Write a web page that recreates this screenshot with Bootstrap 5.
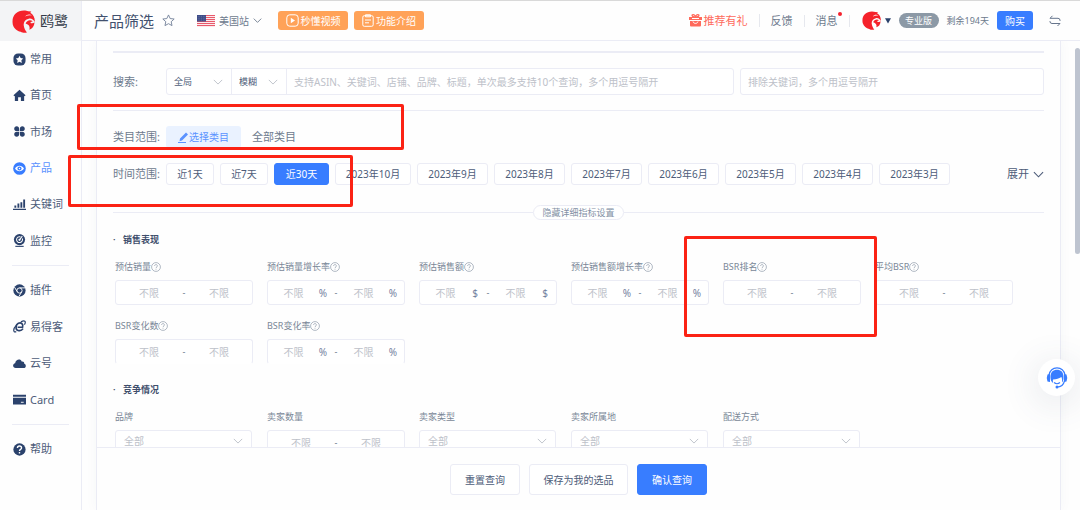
<!DOCTYPE html>
<html lang="zh-CN">
<head>
<meta charset="utf-8">
<meta name="viewport" content="width=device-width, initial-scale=1">
<title>产品筛选 - 鸥鹭</title>
<link rel="stylesheet" href="https://cdn.jsdelivr.net/npm/bootstrap@5.3.0/dist/css/bootstrap.min.css">
<style>
:root{--ink:#4d5c79;--navy:#2b426c;--mute:#6d7a8d;--line:#ebecf5;--hint:#bdc1c9;--blue:#387dff}
body{font-family:"Noto Sans","Noto Sans CJK SC",sans-serif;font-size:11px;line-height:16px;color:var(--ink);background:#fefefe;border-top:1px solid #d9d9d9}
a{color:inherit;text-decoration:none}
svg{flex:none}
.side{width:82px;border-right:1px solid var(--line)}
.brand{height:40px;background:#f3f4f6;font-size:14px;color:#333b49;padding-left:12px;gap:5px}
.side-group{padding-left:13px}
.side-group a{gap:4px;color:var(--ink)}
.side-group a.active{color:#5b92ff}
.side-group svg{color:var(--navy);width:13px;height:13px}
.side-group a.active svg{color:var(--blue)}
.g6{height:218px}.g4{height:146px}.g1{height:36px}
.side-line{height:1px;background:var(--line);margin:6px 12px}
.top{height:40px;border-bottom:1px solid var(--line);padding:0 19px 0 12px}
.top h1{font-size:15px;line-height:20px;color:#42516e;font-weight:400}
.site{font-size:10px;color:var(--mute);margin-left:22px}
.btn{--bs-btn-font-size:10px;--bs-btn-line-height:14px;--bs-btn-padding-x:0;--bs-btn-padding-y:0;--bs-btn-border-radius:3px}
.tips{gap:6px}
.btn-tip{--bs-btn-bg:#ffa258;--bs-btn-color:#fff;--bs-btn-hover-bg:#f5933f;--bs-btn-hover-color:#fff;width:70px;height:19px;border:0;gap:2px}
.btn-main{--bs-btn-bg:#387dff;--bs-btn-color:#fff;--bs-btn-border-color:#387dff;--bs-btn-hover-bg:#2468ea;--bs-btn-hover-color:#fff}
.btn-line{--bs-btn-bg:#fff;--bs-btn-color:#4d5c79;--bs-btn-border-color:#ebecf5;--bs-btn-hover-border-color:#387dff;--bs-btn-hover-color:#387dff}
.btn-buy{width:36px;height:19px;border:0}
.links a{padding:0 11px;border-right:1px solid #e6e8ee;line-height:12px;color:var(--mute);gap:2px}
.links a.gift{color:#ff6a5c}
.dot{width:4px;height:4px;background:#f5222d;right:7px;top:-3px}
.plan{background:#8c99a6;font-size:9px;line-height:15px;width:40px}
.remain{font-size:9px;color:var(--mute)}
.stage{padding:0 19px 0 14px}
.panel{border:solid var(--line);border-width:0 1px;box-shadow:0 0 12px rgba(60,70,110,.04)}
.scroller{padding:10px 16px 0}
.rule{height:1px;background:var(--line)}
.rule.strong{height:2px}
.line-gap{margin-top:15px}
.fold-gap{margin-top:20px}
.lab{width:53px;color:var(--mute)}
.form-control,.form-select{font-size:10px;line-height:14px;color:var(--ink);border-color:var(--line);background-color:#fff;border-radius:3px;min-height:0}
.form-control::placeholder{color:var(--hint);opacity:1}
.form-select{background-image:url("data:image/svg+xml,%3Csvg xmlns='http://www.w3.org/2000/svg' viewBox='0 0 12 12' fill='none' stroke='%23b4b9c3'%3E%3Cpath d='M1 3.5l5 5 5-5'/%3E%3C/svg%3E");background-size:10px;background-position:right 8px center}
.find{height:27px;padding:0 7px}
.find-wrap{flex:568 1 0;width:auto}.skip{flex:288 1 0;width:auto;min-width:0;margin-left:6px}
.input-group>.mode{flex:none;width:66px;font-size:9px}
.input-group>.mode.short{width:56px}
.pick{--bs-btn-font-size:10px;width:75px;height:22px;background:#eaf2ff;color:#5b92ff;border:0}
.every{margin-left:11px;color:var(--mute)}
.days{gap:6px}
.days .btn{height:22px;min-width:48px}
.days .btn-main{min-width:55px}
.days .month{min-width:71px}
.days .month.wide{min-width:76px}
.fold{color:var(--hint)}
.fold .btn{font-size:9px;width:91px;height:15px;border-radius:8px;color:#8290a5}
.block-title{font-size:9px;line-height:14px;font-weight:600;color:#3f4e6c;margin:13px 0}
.block-title.next{margin-top:19px}
.block-title::before{content:"·";display:inline-block;width:10px}
.fields{display:grid;grid-template-columns:repeat(auto-fill,138px);gap:14px;padding-left:2px}
.cap{font-size:9px;line-height:14px;color:#7a8797;margin-bottom:6px;white-space:nowrap}
.cap svg{vertical-align:-2px;color:#98a3b0}
.range{height:25px;border:1px solid var(--line);border-radius:3px;background:#fff}
.cut .range{border-bottom-color:transparent}
.range .half{flex:1 1 0;min-width:0;padding:0 1px}
.range .half.unit{padding-right:6px}
.range input{flex:1 1 0;min-width:0;width:0;padding:0;border:0;text-align:center;background:none}
.range span.u{width:10px;text-align:center;font-size:10px;color:#7482a0}
.dash{width:4px;text-align:center;color:var(--mute);font-size:9px}
.pick-one{width:137px;height:22px;padding:0 8px;color:var(--hint)}
.actions{border-top:1px solid var(--line);padding:16px 0 15px;gap:9px;background:#fefefe}
.actions .btn{height:31px;width:70px}
.actions .btn.save{width:99px}
.thumb{right:0;top:47px;width:5px;height:206px;background:#bec4d0;border-radius:3px}
.helper{right:5px;top:358px;width:37px;height:37px;border:0;background:#fff;box-shadow:0 6px 36px 2px rgba(70,85,115,.14);padding:0}
.mark-box{border:3px solid #fb2214;border-radius:2px;pointer-events:none}
.mb-a{left:77px;top:103px;width:327px;height:46px}
.mb-b{left:68px;top:154px;width:285px;height:52px}
.mb-c{left:684px;top:235px;width:193px;height:101px}
</style>
</head>
<body class="d-flex vh-100 overflow-hidden position-relative">

<svg class="d-none">
  <symbol id="bird" viewBox="0 0 22 22"><path fill="#f5222b" d="M.8 14C-.8 6 4 .5 11.500.5c1.500 0 3 .3 4 .8l3 .2-1 1.200C20.500 4.500 22 7.500 21.800 11.500 20.500 9 18.500 7.800 16 8.300c-3.500.8-5.300 3.500-4.700 6.700.4 2.500 1.500 4.700 3 6.500-2 .6-4.500.3-6-.7C5 20 2 18 .8 14z"/><path fill="#fff" d="M12.500 6.300C14 4.300 17 3.600 19 5.300c-2.500-.5-4.500 0-6.500 1z"/><path fill="#f5222b" d="M13 13c1-3 4.500-4.300 7-2-1.400 0-2.300.5-2.400 1.400 1.500.5 3 .3 4-.6-.3 4-2.400 6.400-5 7 1-2.500-.6-5-3.600-5.800z"/></symbol>
  <symbol id="down" viewBox="0 0 12 12"><path fill="none" stroke="currentColor" stroke-width="1.200" d="M1 3.500l5 5 5-5"/></symbol>
  <symbol id="ask" viewBox="0 0 12 12"><circle cx="6" cy="6" r="5.300" fill="none" stroke="currentColor" stroke-width=".9"/><path d="M4.300 4.800C4.300 2.500 7.700 2.500 7.700 4.700 7.700 6 6 6 6 7.300M6 8.200v1" fill="none" stroke="currentColor" stroke-width=".9"/></symbol>
</svg>

<aside class="side flex-shrink-0">
  <a href="#" class="brand d-flex align-items-center"><svg width="23" height="23"><use href="#bird"/></svg>鸥鹭</a>
  <nav aria-label="主菜单">
    <div class="side-group g6 d-flex flex-column">
      <a href="#" class="d-flex flex-fill align-items-center"><svg viewBox="0 0 14 14"><rect x=".5" y=".5" width="13" height="13" rx="5" fill="currentColor"/><path fill="#fff" d="M7 3l1.200 2.500 2.800.4-2 2 .5 2.800L7 9.400l-2.500 1.300.5-2.800-2-2 2.800-.4z"/></svg>常用</a>
      <a href="#" class="d-flex flex-fill align-items-center"><svg viewBox="0 0 14 14"><path fill="currentColor" d="M7 .8l6.500 6-.9.900-.6-.4v5.700H8.500V9h-3v4H2V7.300l-.6.4-.9-.9z"/></svg>首页</a>
      <a href="#" class="d-flex flex-fill align-items-center"><svg viewBox="0 0 14 14"><g fill="currentColor"><path d="M4 1.300c1.700 0 2.600 1 2.600 2.700v2.500H4C2.400 6.500 1.300 5.500 1.300 4S2.400 1.300 4 1.300zM10 1.300c1.600 0 2.700 1.100 2.700 2.700S11.600 6.500 10 6.500H7.400V4c0-1.700 1-2.700 2.600-2.700zM4 7.400h2.600V10c0 1.700-.9 2.700-2.600 2.700S1.300 11.600 1.300 10 2.400 7.400 4 7.400zM7.400 7.400H10c1.600 0 2.700 1 2.700 2.600s-1.100 2.700-2.700 2.700S7.400 11.700 7.400 10z"/></g></svg>市场</a>
      <a href="#" class="active d-flex flex-fill align-items-center"><svg viewBox="0 0 14 14"><circle cx="7" cy="7" r="6.800" fill="currentColor"/><path fill="#fff" d="M2.200 7c2.200-4 7.400-4 9.600 0-2.200 4-7.400 4-9.600 0z"/><circle cx="7" cy="7" r="2.200" fill="currentColor"/><circle cx="7" cy="7" r=".8" fill="#fff"/></svg>产品</a>
      <a href="#" class="d-flex flex-fill align-items-center"><svg viewBox="0 0 14 14"><path fill="currentColor" d="M0 11.500h14V13H0zM1.500 8h2v2.500h-2zM4.800 6h2v4.500h-2zM8 4.500h2v6H8zM11 1.500h2v9h-2z"/></svg>关键词</a>
      <a href="#" class="d-flex flex-fill align-items-center"><svg viewBox="0 0 14 14"><circle cx="7" cy="6" r="6" fill="currentColor"/><path fill="none" stroke="#fff" stroke-width="1.100" d="M10 4.800A3.200 3.200 0 1 1 8 3M7 6.300l3-4"/><circle cx="7" cy="6.300" r="1.200" fill="#fff"/><path stroke="currentColor" stroke-width="1.200" d="M2.500 13.300h9"/></svg>监控</a>
    </div>
    <div class="side-line"></div>
    <div class="side-group g4 d-flex flex-column">
      <a href="#" class="d-flex flex-fill align-items-center"><svg viewBox="0 0 14 14"><circle cx="7" cy="7" r="6.600" fill="currentColor"/><circle cx="7" cy="7" r="2.800" fill="none" stroke="#fff"/><path fill="none" stroke="#fff" d="M7 4.200h6M4.600 8.400l-3-5M9.400 8.400l-3 5"/></svg>插件</a>
      <a href="#" class="d-flex flex-fill align-items-center"><svg viewBox="0 0 14 14"><path fill="none" stroke="currentColor" stroke-width="1.800" d="M5 7.800h5.300C11.500 4 8.500 2.300 5.800 3.600 2.500 5.300 2.500 10.300 5.500 11.300c2.200.6 4.200-.3 5.300-2"/><path fill="none" stroke="currentColor" stroke-width="1.300" d="M3.500 12.500C-.5 14 .3 9 3.500 5.800M8.500 2C12.500 0 14.500 1 12.300 5"/></svg>易得客</a>
      <a href="#" class="d-flex flex-fill align-items-center"><svg viewBox="0 0 14 14"><path fill="currentColor" d="M3 11.800C-.6 11.800-.8 7.300 2.300 6.700 3 2.500 8 1.300 9.600 5c2-.2 2.600 1 2.500 2.300 2.500.8 2.200 4.500-.6 4.500z"/></svg>云号</a>
      <a href="#" class="d-flex flex-fill align-items-center"><svg viewBox="0 0 14 14"><path fill="currentColor" d="M0 2h14v2H0zM0 5h14v7.500H0z"/><path stroke="#fff" d="M8.500 10h3"/></svg>Card</a>
    </div>
    <div class="side-line"></div>
    <div class="side-group g1 d-flex flex-column">
      <a href="#" class="d-flex flex-fill align-items-center"><svg viewBox="0 0 14 14"><circle cx="7" cy="7" r="6.600" fill="currentColor"/><path fill="none" stroke="#fff" stroke-width="1.500" d="M4.800 5.500c0-3 4.400-2.800 4.400-.2C9.200 7 7 6.800 7 8.500M7 9.600v1.600"/></svg>帮助</a>
    </div>
  </nav>
</aside>

<div class="d-flex flex-column flex-grow-1 overflow-hidden">
  <header class="top d-flex align-items-center flex-shrink-0">
    <h1 class="mb-0 me-2">产品筛选</h1>
    <svg width="13" height="13" viewBox="0 0 14 14"><path fill="none" stroke="#75839a" d="M7 1l1.800 3.900 4.300.5-3.200 2.900.9 4.200L7 10.400l-3.800 2.100.9-4.200L.9 5.400l4.300-.5z"/></svg>
    <a href="#" class="site d-flex align-items-center">
      <svg width="18" height="12" viewBox="0 0 18 12" class="me-1"><path fill="#fbe9ec" d="M0 0h18v12H0z"/><path stroke="#e8596b" stroke-width="1" d="M0 .5h18M0 2.500h18M0 4.500h18M0 6.500h18M0 8.500h18M0 10.500h18"/><path fill="#3b4a86" d="M0 0h9v6.500H0z"/><path stroke="#97a0c6" stroke-width=".6" stroke-dasharray=".7 1" d="M.8 1.300h8M.8 3.200h8M.8 5.100h8"/></svg>
      <span class="me-1">美国站</span><svg width="9" height="9"><use href="#down"/></svg></a>
    <div class="tips d-flex ms-3">
      <button class="btn btn-tip d-flex align-items-center justify-content-center"><svg width="13" height="13" viewBox="0 0 13 13"><rect x=".8" y=".8" width="11.400" height="11.400" rx="3" fill="none" stroke="#fff"/><path fill="#fff" d="M4.800 3.800L9 6.500 4.800 9.200z"/></svg>秒懂视频</button>
      <button class="btn btn-tip d-flex align-items-center justify-content-center"><svg width="12" height="13" viewBox="0 0 12 13"><rect x=".8" y="1.700" width="10.400" height="10.600" rx="1.500" fill="none" stroke="#fff"/><path fill="none" stroke="#fff" d="M3.500.8h5v2h-5zM3 6h6M3 8.800h4"/></svg>功能介绍</button>
    </div>
    <div class="links d-flex align-items-center ms-auto">
      <a href="#" class="gift d-flex align-items-center"><svg width="13" height="13" viewBox="0 0 13 13"><path fill="currentColor" d="M0 3h13v3H0zM1 7h11v4.500q0 1-1 1H2q-1 0-1-1z"/><path fill="none" stroke="currentColor" stroke-width="1.300" d="M6.500 3C4 3 2.500 2 3.300.9 5 .2 6 1.300 6.500 3 7 1.300 8 .2 9.700.9 10.500 2 9 3 6.500 3z"/><path fill="none" stroke="#fff" d="M4 7.500c.5 2.500 4.500 2.500 5 0M3 4.500h7"/></svg>推荐有礼</a>
      <a href="#">反馈</a>
      <a href="#" class="position-relative">消息<i class="dot position-absolute rounded-circle"></i></a>
    </div>
    <a href="#" class="d-flex align-items-center ms-2 ps-1" aria-label="账号"><svg width="19" height="19" class="me-1"><use href="#bird"/></svg><svg width="6" height="6" viewBox="0 0 6 6"><path fill="#2b426c" d="M0 .3h6L3 5.500z"/></svg></a>
    <span class="plan rounded-pill text-white text-center mx-2">专业版</span>
    <span class="remain me-2">剩余194天</span>
    <button class="btn btn-main btn-buy me-3">购买</button>
    <svg width="12" height="12" viewBox="0 0 12 12"><path fill="none" stroke="#66758c" d="M3.500.8L1 3.300h8q2 0 2 2V6M8.500 11L11 8.500H3q-2 0-2-2V6"/></svg>
  </header>

  <main class="stage d-flex flex-grow-1 overflow-hidden">
    <div class="panel d-flex flex-column flex-grow-1">
      <form class="scroller flex-grow-1 overflow-hidden" id="filter">
        <div class="rule strong"></div>
        <div class="d-flex align-items-center line-gap">
          <label class="lab flex-shrink-0" for="kw">搜索:</label>
          <div class="input-group find-wrap flex-nowrap">
            <select class="form-select find mode" aria-label="范围"><option>全局</option></select>
            <select class="form-select find mode short" aria-label="匹配"><option>模糊</option></select>
            <input id="kw" class="form-control find" placeholder="支持ASIN、关键词、店铺、品牌、标题，单次最多支持10个查询，多个用逗号隔开">
          </div>
          <input class="form-control find skip" aria-label="排除" placeholder="排除关键词，多个用逗号隔开">
        </div>
        <div class="rule line-gap"></div>
        <div class="d-flex align-items-center line-gap">
          <span class="lab">类目范围:</span>
          <button type="button" class="btn pick d-flex align-items-center justify-content-center"><svg width="11" height="11" viewBox="0 0 11 11"><path fill="currentColor" d="M2 6.500L8 .5l2 2-6 6-2.500.7zM0 10h8v1H0z"/></svg>选择类目</button>
          <span class="every">全部类目</span>
        </div>
        <div class="d-flex align-items-center line-gap">
          <span class="lab">时间范围:</span>
          <div class="days d-flex" id="days"></div>
          <a href="#" class="ms-auto d-flex align-items-center">展开<svg width="11" height="11" class="ms-1"><use href="#down"/></svg></a>
        </div>
        <div class="fold d-flex align-items-center fold-gap">
          <div class="rule flex-grow-1"></div><button type="button" class="btn btn-line">隐藏详细指标设置</button><div class="rule flex-grow-1"></div>
        </div>
        <h2 class="block-title">销售表现</h2>
        <div class="fields" id="sales"></div>
        <h2 class="block-title next">竞争情况</h2>
        <div class="fields" id="rivals"></div>
      </form>
      <div class="actions d-flex justify-content-center flex-shrink-0">
        <button class="btn btn-line">重置查询</button>
        <button class="btn btn-line save">保存为我的选品</button>
        <button class="btn btn-main">确认查询</button>
      </div>
    </div>
  </main>
</div>

<div class="thumb position-absolute"></div>
<button class="helper position-absolute rounded-circle d-flex align-items-center justify-content-center" aria-label="客服">
  <svg width="22" height="22" viewBox="0 0 22 22"><path fill="none" stroke="#387dff" stroke-width="1.200" d="M3 8C5-1.500 17-1.500 19 8M18.500 14c-1 4-4 6-7.500 6"/><path fill="#387dff" d="M1.500 7.500Q0 11 1.500 14.500l2.500.5V7zM20.500 7.500Q22 11 20.500 14.500L18 15V7zM4.500 11C4 5 7.500 2.800 11 2.800S18 5 17.500 11c0 2-.6 3.500-1.500 4.500.3-3 0-4-.6-5.500-2.500 1.500-5 2.500-8.400 2.500-.3 1 0 2.500.1 3.500C5.500 15 4.600 13 4.500 11z"/><path fill="none" stroke="#387dff" stroke-width="1.100" d="M8 15.500q3 2.500 6 0"/><circle cx="11" cy="20" r="1.500" fill="#387dff"/></svg>
</button>
<div class="mark-box mb-a position-absolute"></div>
<div class="mark-box mb-b position-absolute"></div>
<div class="mark-box mb-c position-absolute"></div>

<script src="https://cdn.jsdelivr.net/npm/bootstrap@5.3.0/dist/js/bootstrap.bundle.min.js"></script>
<script>
const days = ['近1天','近7天','近30天',...[10,9,8,7,6,5,4,3].map(m => `2023年${m}月`)];
document.getElementById('days').innerHTML = days.map((d, i) =>
  `<button type="button" class="btn ${i === 2 ? 'btn-main' : 'btn-line'} ${i > 2 ? 'month' : ''} ${i === 3 ? 'wide' : ''}">${d}</button>`).join('');

const half = (name, u, end) => `<div class="half d-flex align-items-center ${u ? 'unit' : ''}"><input class="form-control" placeholder="不限" aria-label="${name}${end}">${u ? `<span class="u">${u}</span>` : ''}</div>`;
const range = f => `<div class="range d-flex align-items-center">${half(f.n, f.u, '下限')}<span class="dash">-</span>${half(f.n, f.u, '上限')}</div>`;
const pick = (f, id) => `<select class="form-select pick-one" id="${id}"><option>全部</option></select>`;
const ask = '<svg width="10" height="10"><use href="#ask"/></svg>';
function draw(box, list) {
  document.getElementById(box).innerHTML = list.map((f, i) => f.pick
    ? `<div><label class="cap d-block" for="${box + i}">${f.n}</label>${pick(f, box + i)}</div>`
    : `<div class="${f.cut ? 'cut' : ''}"><div class="cap">${f.n}${f.q ? ask : ''}</div>${range(f)}</div>`).join('');
}
draw('sales', [
  {n:'预估销量',q:1},{n:'预估销量增长率',u:'%',q:1},{n:'预估销售额',u:'$',q:1},{n:'预估销售额增长率',u:'%',q:1},
  {n:'BSR排名',q:1},{n:'平均BSR',q:1},{n:'BSR变化数',q:1,cut:1},{n:'BSR变化率',u:'%',q:1,cut:1}]);
draw('rivals', [{n:'品牌',pick:1},{n:'卖家数量'},{n:'卖家类型',pick:1},{n:'卖家所属地',pick:1},{n:'配送方式',pick:1}]);
</script>
</body>
</html>
